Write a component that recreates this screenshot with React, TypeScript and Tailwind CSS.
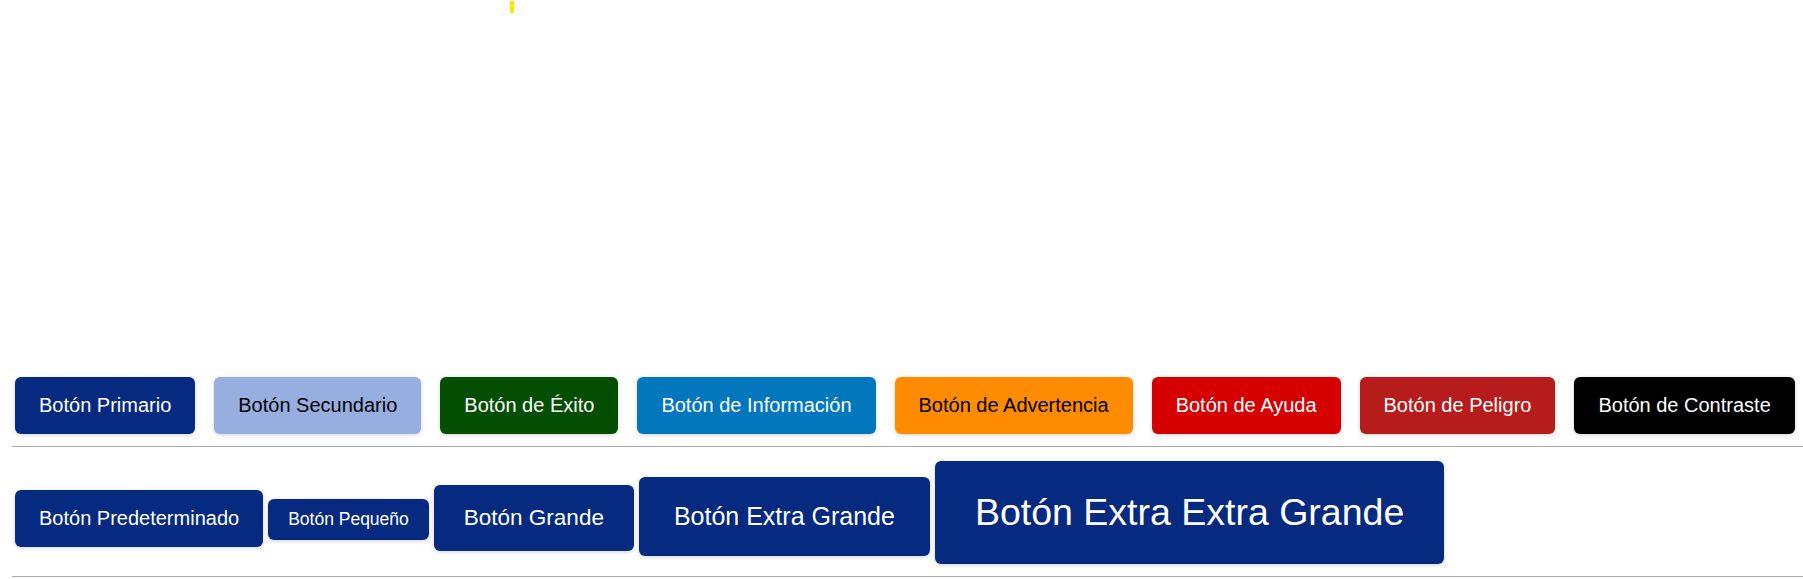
const variants = [
  { label: "Botón Primario", cls: "bg-[#062a80] text-white" },
  { label: "Botón Secundario", cls: "bg-[#97aee0] text-black" },
  { label: "Botón de Éxito", cls: "bg-[#034e03] text-white" },
  { label: "Botón de Información", cls: "bg-[#0277bd] text-white" },
  { label: "Botón de Advertencia", cls: "bg-[#ff8c00] text-black" },
  { label: "Botón de Ayuda", cls: "bg-[#d50000] text-white" },
  { label: "Botón de Peligro", cls: "bg-[#b71c1c] text-white" },
  { label: "Botón de Contraste", cls: "bg-black text-white" },
]

const sizes = [
  { label: "Botón Predeterminado", cls: "text-[20px] leading-[23px] px-6 py-[17px]" },
  { label: "Botón Pequeño", cls: "text-[17.5px] leading-[22px] px-5 pt-[9px] pb-[10px]" },
  { label: "Botón Grande", cls: "text-[22.5px] leading-[26px] px-[30px] py-5" },
  { label: "Botón Extra Grande", cls: "text-[25px] leading-[29px] px-[35px] py-[25px]" },
  { label: "Botón Extra Extra Grande", cls: "text-[37.5px] leading-[43px] px-10 py-[30px]" },
]

const base =
  "rounded-[6px] shadow-[0_1px_4px_rgba(0,0,0,0.18)] whitespace-nowrap font-['Liberation_Sans',Arial,sans-serif]"

export default function App() {
  return (
    <div className="w-[1803px] h-[579px] bg-white overflow-hidden font-['Liberation_Sans',Arial,sans-serif]">
      <div className="ml-[510px] mt-[1px] h-[12px] w-[4px] bg-[#ffe600]" />

      <div className="mt-[364px] flex gap-[19px] pl-[15px]">
        {variants.map((v) => (
          <button key={v.label} className={`${base} ${v.cls} text-[20px] leading-[23px] px-6 py-[17px]`}>
            {v.label}
          </button>
        ))}
      </div>

      <div className="mt-[12px] ml-[12px] border-t border-[#a9a9a9]" />

      <div className="mt-[14px] flex items-baseline gap-[5px] pl-[15px]">
        {sizes.map((s) => (
          <button key={s.label} className={`${base} bg-[#062a80] text-white ${s.cls}`}>
            {s.label}
          </button>
        ))}
      </div>

      <div className="mt-[12px] ml-[12px] border-t border-[#a9a9a9]" />
    </div>
  )
}
